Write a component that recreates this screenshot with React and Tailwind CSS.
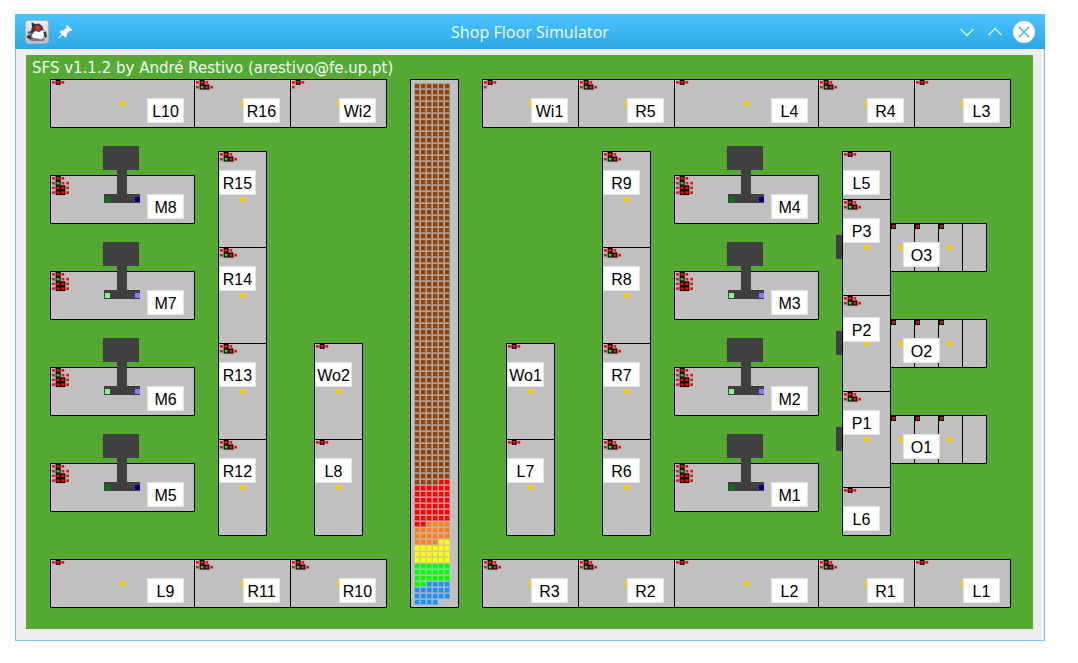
import React from "react";

const U = 24;

// Lamp patterns: r = red lamp, R = red lamp on a black block, G = green lamp on a black block
const LAMPS = {
  linear: ["rRr"],
  rotary: ["rRr", "rGRr"],
  warehouse: ["rRr", "r"],
  machine: ["rRr", "rGrr", "rRRr", "rRRr"],
};

function Lamps({ kind }) {
  const cells = LAMPS[kind].flatMap((row, y) =>
    row.split("").map((c, x) => ({ c, x: 3.4 + x * 4.75, y: 3.4 + y * 4.75, key: x + "-" + y }))
  );
  return (
    <svg className="[grid-area:1/1]" width="22" height="22" aria-hidden="true">
      {cells.filter((l) => l.c !== "r").map((l) => (
        <rect key={l.key} x={l.x - 2.5} y={l.y - 2.6} width="5" height="5" fill="#000" />
      ))}
      {cells.map((l) => (
        <rect key={l.key} x={l.x - 1.35} y={l.y - 1.35} width="2.7" height="2.7" fill={l.c === "G" ? "#00f020" : "#ff0808"} />
      ))}
    </svg>
  );
}

function Label({ children }) {
  return (
    <span className="flex h-[25px] w-[37px] items-center justify-center border border-[#e2e2e2] bg-white pt-0.5 text-base leading-none text-black">
      {children}
    </span>
  );
}

function Dot() {
  return <span className="block h-[5px] w-[5px] bg-[#ffc800]" />;
}

// name, column, row, width, height (in floor units), lamp pattern
const CONVEYORS = [
  ["L10", 0, 0, 6, 2, "linear"], ["R16", 6, 0, 4, 2, "rotary"], ["Wi2", 10, 0, 4, 2, "warehouse"],
  ["Wi1", 18, 0, 4, 2, "warehouse"], ["R5", 22, 0, 4, 2, "rotary"], ["L4", 26, 0, 6, 2, "linear"],
  ["R4", 32, 0, 4, 2, "rotary"], ["L3", 36, 0, 4, 2, "linear"],
  ["L9", 0, 20, 6, 2, "linear"], ["R11", 6, 20, 4, 2, "rotary"], ["R10", 10, 20, 4, 2, "rotary"],
  ["R3", 18, 20, 4, 2, "rotary"], ["R2", 22, 20, 4, 2, "rotary"], ["L2", 26, 20, 6, 2, "linear"],
  ["R1", 32, 20, 4, 2, "rotary"], ["L1", 36, 20, 4, 2, "linear"],
  ["R15", 7, 3, 2, 4, "rotary"], ["R14", 7, 7, 2, 4, "rotary"], ["R13", 7, 11, 2, 4, "rotary"], ["R12", 7, 15, 2, 4, "rotary"],
  ["Wo2", 11, 11, 2, 4, "linear"], ["L8", 11, 15, 2, 4, "linear"],
  ["Wo1", 19, 11, 2, 4, "linear"], ["L7", 19, 15, 2, 4, "linear"],
  ["R9", 23, 3, 2, 4, "rotary"], ["R8", 23, 7, 2, 4, "rotary"], ["R7", 23, 11, 2, 4, "rotary"], ["R6", 23, 15, 2, 4, "rotary"],
  ["L5", 33, 3, 2, 2, "linear"], ["P3", 33, 5, 2, 4, "rotary"], ["P2", 33, 9, 2, 4, "rotary"],
  ["P1", 33, 13, 2, 4, "rotary"], ["L6", 33, 17, 2, 2, "linear"],
];

const MACHINES = [
  ["M8", 0, 4, true], ["M7", 0, 8, false], ["M6", 0, 12, false], ["M5", 0, 16, true],
  ["M4", 26, 4, true], ["M3", 26, 8, false], ["M2", 26, 12, false], ["M1", 26, 16, true],
];

const ROLLERS = [["O3", 35, 6], ["O2", 35, 10], ["O1", 35, 14]];

// Puts a piece of equipment on the floor at a column and row
function Place({ col, row, w, h, children }) {
  return (
    <div className="absolute grid" style={{ left: col * U, top: row * U, width: w * U + 1, height: h * U + 1 }}>
      {children}
    </div>
  );
}

function Conveyor({ name, wide, square, lamps }) {
  const side = wide ? "justify-end pr-[11px]" : "pl-px";
  const drop = name === "P2" ? "pt-[22px]" : "pt-[19px]";
  return (
    <>
      {name[0] === "P" && <span className="-ml-1.5 mt-9 h-6 w-1.5 bg-[#404040] [grid-area:1/1]" />}
      <div className="border border-black bg-[#c0c0c0] [grid-area:1/1]" />
      <Lamps kind={lamps} />
      {!square && (
        <div className="flex items-center justify-center [grid-area:1/1]">
          <Dot />
        </div>
      )}
      <div className={`flex items-start [grid-area:1/1] ${side} ${drop}`}>
        <Label>{name}</Label>
      </div>
    </>
  );
}

function Machine({ name, lit }) {
  return (
    <>
      <div className="border border-black bg-[#c0c0c0] [grid-area:1/1]" />
      <Lamps kind="machine" />
      <svg className="-mt-[29px] ml-[53px] [grid-area:1/1]" width="40" height="60" shapeRendering="crispEdges" aria-hidden="true">
        <path d="M0 0H36V24H24V48H37V57H1V48H14V24H0Z" fill="#404040" />
        <rect x="2" y="51" width="5" height="5" fill={lit ? "#008000" : "#80ff80"} />
        <rect x="32" y="51" width="5" height="5" fill={lit ? "#000080" : "#8080ff"} />
      </svg>
      <div className="flex items-start justify-end pr-[11px] pt-[19px] [grid-area:1/1]">
        <Label>{name}</Label>
      </div>
    </>
  );
}

function RollerOutput({ name }) {
  return (
    <>
      <div className="flex border border-black bg-[#c0c0c0] [grid-area:1/1]">
        {[0, 1, 2].map((i) => (
          <div key={i} className="w-6 border-r border-black">
            <div className="flex h-[5px] w-[5px] items-center justify-center bg-black">
              <span className="h-[3px] w-[3px] bg-[#e00c14]" />
            </div>
          </div>
        ))}
      </div>
      <div className="flex items-center gap-[43px] pl-[9px] [grid-area:1/1]">
        <Dot />
        <Dot />
      </div>
      <div className="flex items-start pl-[13px] pt-[19px] [grid-area:1/1]">
        <Label>{name}</Label>
      </div>
    </>
  );
}

const STOCK = [
  ["#8b4513", 400], ["#ff0000", 40], ["#ff7f1e", 20], ["#ffff00", 20], ["#00ff00", 20], ["#1e90ff", 20],
];

const PIECES = STOCK.flatMap(([colour, count]) => Array(count).fill(colour));

function Warehouse() {
  return (
    <div className="border border-black bg-[#c0c0c0] pl-[3px] pt-[3px] [grid-area:1/1]">
      <svg className="block" width="38" height="524" shapeRendering="crispEdges" role="img" aria-label="Warehouse stock">
        {PIECES.map((colour, i) => {
          const x = (i % 6) * 6;
          const y = Math.floor(i / 6) * 6;
          return (
            <g key={i} fill={colour}>
              <rect x={x} y={y} width="6" height="6" opacity="0.25" />
              <rect x={x + 1} y={y + 1} width="4" height="4" />
              <rect x={x + 1} y={y + 1} width="5" height="5" opacity="0.35" />
            </g>
          );
        })}
      </svg>
    </div>
  );
}

function AppIcon() {
  return (
    <svg width="24" height="24" viewBox="0 0 24 24" aria-hidden="true">
      <defs>
        <linearGradient id="tile" x1="0" y1="0" x2="0" y2="1">
          <stop offset="0" stopColor="#efefef" />
          <stop offset="1" stopColor="#b9bcc0" />
        </linearGradient>
      </defs>
      <rect x="0.5" y="0.5" width="23" height="23" rx="3" fill="url(#tile)" stroke="#a3b4c0" />
      <path d="M8 12L12 8L18 10L19 15L16 19L9 18L6 15Z" fill="#fbfbfb" />
      <path d="M6.500 2L10 4L14 3.500L17 6L19 11L17 10L14 12L10 11L8 13L6 17L9 19L4 19L1.500 17L4 14L2.500 12L6 11L7 7Z" fill="#35373c" />
      <path d="M2 13L5 12.500L7 14L4.500 16Z" fill="#8d9299" />
      <path d="M18.500 12L21 11.500L22 17L20 18L19 15Z" fill="#33363b" />
      <path d="M4 19L10 18L16 19.500L20 18L19 21H6Z" fill="#777b81" />
      <circle cx="12.800" cy="8.300" r="3" fill="#c9202b" />
      <circle cx="12.500" cy="7.600" r="1.200" fill="#e84a50" />
    </svg>
  );
}

export default function App() {
  return (
    <div className="min-h-screen bg-white pl-[15px] pr-[33px] pt-3.5 font-['Liberation_Sans',Arial,sans-serif]">
      <main className="border border-t-0 border-[#74c8f0] bg-[#eeeeee]">
        <header className="-mx-px flex h-[35px] items-center bg-linear-to-b from-[#4bc4ff] to-[#2ba9e4] px-2.5 font-['Noto_Sans',sans-serif] text-white">
          <div className="flex flex-1 items-center gap-2">
            <AppIcon />
            <button type="button" aria-label="Keep window on top">
              <svg className="block" width="16" height="16" viewBox="0 0 16 16" fill="#fff" aria-hidden="true">
                <path d="M10 1L15.500 6L14 7L13 6.800L10 9.500L10 12L8.500 13.500L5.500 11L1.500 14.500L1 14L4.500 10L2.500 8L4 6.500L6.500 6.500L9.500 3.500L9 2Z" />
              </svg>
            </button>
          </div>
          <h1 className="text-base leading-5 text-[#e9f7ff]">Shop Floor Simulator</h1>
          <div className="flex flex-1 items-center justify-end gap-2">
            <button type="button" aria-label="Minimize">
              <svg className="block" width="20" height="16" viewBox="0 0 20 16" fill="none" stroke="#e6f6ff" strokeWidth="1.200" aria-hidden="true"><path d="M3.500 5L10 11.500L16.500 5" /></svg>
            </button>
            <button type="button" aria-label="Maximize">
              <svg className="block" width="20" height="16" viewBox="0 0 20 16" fill="none" stroke="#e6f6ff" strokeWidth="1.200" aria-hidden="true"><path d="M3.500 11L10 4.500L16.500 11" /></svg>
            </button>
            <button type="button" aria-label="Close">
              <svg className="block" width="22" height="22" viewBox="0 0 22 22" aria-hidden="true">
                <circle cx="11" cy="11" r="11" fill="#fff" />
                <path d="M6 6L16 16M16 6L6 16" stroke="#3bb0e8" strokeWidth="1.400" />
              </svg>
            </button>
          </div>
        </header>
        <div className="pb-[11px] pl-2.5 pr-[11px] pt-1.5">
          <section className="bg-[#55aa33] px-6 pb-[21px]">
            <p className="-ml-[18px] h-6 pt-[5px] font-['DejaVu_Sans',sans-serif] text-[15px] leading-4 text-[#f2faef]">
              SFS v1.1.2 by André Restivo (arestivo@fe.up.pt)
            </p>
            <div className="relative h-[529px]">
              {CONVEYORS.map(([name, col, row, w, h, lamps]) => (
                <Place key={name} col={col} row={row} w={w} h={h}>
                  <Conveyor name={name} wide={w > h} square={w === h} lamps={lamps} />
                </Place>
              ))}
              {MACHINES.map(([name, col, row, lit]) => (
                <Place key={name} col={col} row={row} w={6} h={2}>
                  <Machine name={name} lit={lit} />
                </Place>
              ))}
              {ROLLERS.map(([name, col, row]) => (
                <Place key={name} col={col} row={row} w={4} h={2}>
                  <RollerOutput name={name} />
                </Place>
              ))}
              <Place col={15} row={0} w={2} h={22}>
                <Warehouse />
              </Place>
            </div>
          </section>
        </div>
      </main>
    </div>
  );
}
